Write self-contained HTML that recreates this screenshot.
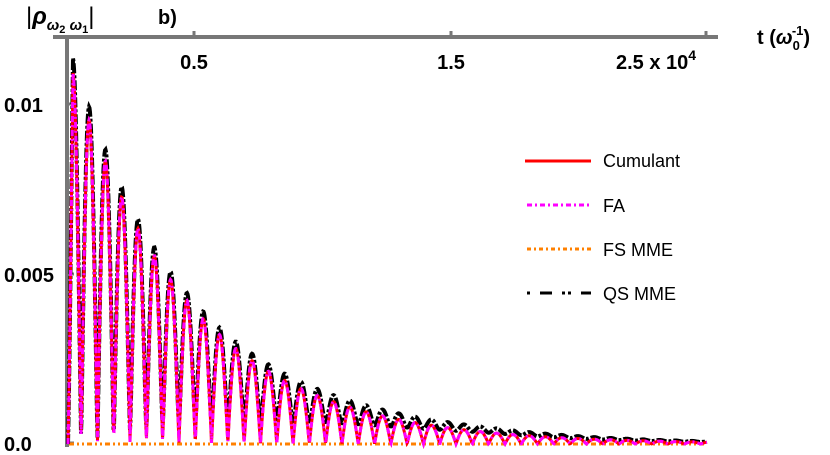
<!DOCTYPE html>
<html><head><meta charset="utf-8"><style>
html,body{margin:0;padding:0;background:#fff;width:830px;height:455px;overflow:hidden}
svg text{font-family:"Liberation Sans",Arial,sans-serif}
</style></head><body>
<svg id="s" width="830" height="455" viewBox="0 0 830 455" xmlns="http://www.w3.org/2000/svg">
<g stroke="#777" stroke-width="4" fill="none">
<line x1="53" y1="37" x2="718" y2="37"/>
<line x1="67" y1="37" x2="67" y2="447"/>
</g>
<g stroke="#777" stroke-width="3">
<line x1="194" y1="31" x2="194" y2="37"/>
<line x1="451" y1="31" x2="451" y2="37"/>
<line x1="706" y1="31" x2="706" y2="37"/>
<line x1="67" y1="104" x2="74" y2="104"/>
<line x1="67" y1="274" x2="74" y2="274"/>
<line x1="67" y1="443" x2="74" y2="443"/>
</g>
<g font-weight="bold" font-size="20" fill="#000">
<text x="194" y="69" text-anchor="middle">0.5</text>
<text x="451" y="69" text-anchor="middle">1.5</text>
<text x="656" y="69" text-anchor="middle">2.5 x 10<tspan font-size="14" dy="-9">4</tspan></text>
<text x="757" y="44">t (<tspan font-style="italic">ω</tspan><tspan font-size="13" dy="6">0</tspan><tspan font-size="13" dx="-8" dy="-15">-1</tspan><tspan dy="9">)</tspan></text>
<text x="4" y="112">0.01</text>
<text x="4" y="282">0.005</text>
<text x="4" y="451">0.0</text>
<text x="158" y="24">b)</text>
</g>
<text x="26" y="24" font-size="24" fill="#000">|<tspan font-style="italic" font-weight="bold">ρ</tspan><tspan font-size="15" font-style="italic" font-weight="bold" dy="6">ω</tspan><tspan font-size="11" font-weight="bold" dy="3">2</tspan><tspan font-size="15" font-style="italic" font-weight="bold" dy="-3"> ω</tspan><tspan font-size="11" font-weight="bold" dy="3">1</tspan><tspan dy="-9">|</tspan></text>
<line x1="69" y1="444" x2="707" y2="444" stroke="#ff8000" stroke-width="3" stroke-dasharray="5,3,2,3,2,3"/>
<path id="pk" fill="none" stroke="#000" stroke-width="4" stroke-dasharray="10,2,3,2"/>
<path id="pr" fill="none" stroke="#f00" stroke-width="3"/>
<path id="pm" fill="none" stroke="#f0f" stroke-width="3" stroke-dasharray="6,3,2,3"/>
<g font-size="18" fill="#000">
<line x1="525" y1="161" x2="591" y2="161" stroke="#f00" stroke-width="3"/>
<text x="603" y="167">Cumulant</text>
<line x1="527" y1="205" x2="591" y2="205" stroke="#f0f" stroke-width="3" stroke-dasharray="5,3,2,3"/>
<text x="603" y="212">FA</text>
<line x1="527" y1="249" x2="591" y2="249" stroke="#ff8000" stroke-width="3" stroke-dasharray="4,3,2,3"/>
<text x="603" y="256">FS MME</text>
<line x1="527" y1="293" x2="591" y2="293" stroke="#000" stroke-width="3" stroke-dasharray="3,10,12,10,3,3"/>
<text x="603" y="300">QS MME</text>
</g>
</svg>
<script>
var base=444,A=371,x0=73,tau=120,P=16.3;
var r="",k="";
for(var x=68;x<=707;x+=0.5){
 var env=A*Math.exp(-(Math.max(x,x0)-x0)/tau);
 if(x<x0) env=A*Math.max(0,(x-68)/5);
 var c=Math.abs(Math.cos(Math.PI*(x-x0)/P));
 var v=env*c;
 var kk=Math.min(1,Math.max(0,(x-x0)/420));kk=Math.pow(kk,1.4)*0.95;
 var b=Math.sqrt(v*v+(kk*env)*(kk*env))*1.04;
 r+=(r?"L":"M")+x.toFixed(1)+" "+(base-v).toFixed(1);
 k+=(k?"L":"M")+x.toFixed(1)+" "+(base-b).toFixed(1);
}
document.getElementById("pr").setAttribute("d",r);
document.getElementById("pm").setAttribute("d",r);
document.getElementById("pk").setAttribute("d",k);
</script>
</body></html>
